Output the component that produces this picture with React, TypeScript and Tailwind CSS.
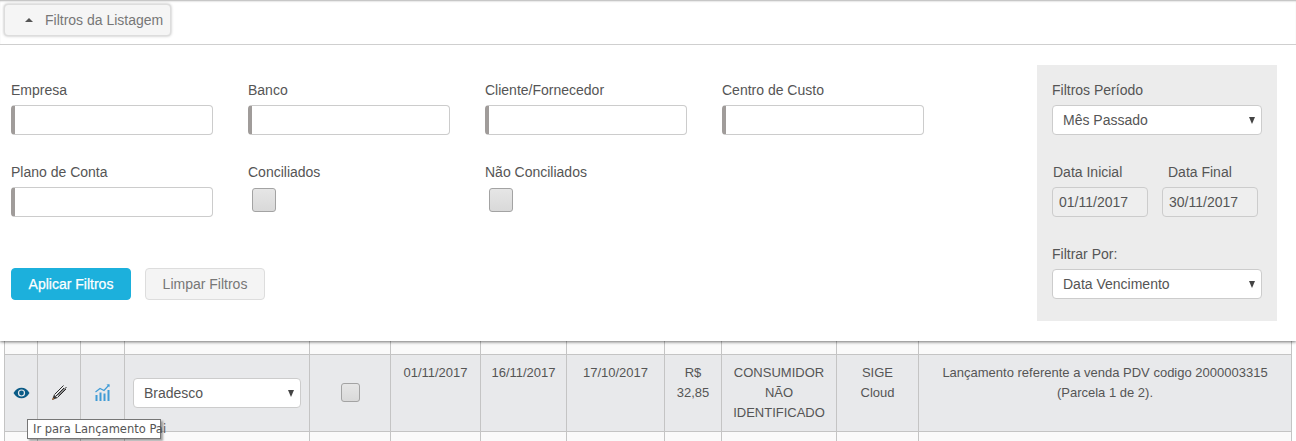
import React from "react";

const Field = ({ label }: { label: string }) => (
  <div className="flex flex-col">
    <label className="h-5 leading-5 mb-[5px] text-[14px] text-[#555]">{label}</label>
    <div className="w-[202px] h-[30px] bg-white border border-[#ccc] border-l-4 border-l-[#a09c9a] rounded-[4px]" />
  </div>
);

const Check = ({ label }: { label: string }) => (
  <div className="flex flex-col">
    <label className="h-5 leading-5 mb-[6px] text-[14px] text-[#555]">{label}</label>
    <div className="ml-1 w-6 h-6 rounded-[3px] border border-[#a3a3a3] bg-gradient-to-b from-[#e6e6e6] to-[#d9d9d9]" />
  </div>
);

const Sel = ({ value, w }: { value: string; w: string }) => (
  <div className={`relative h-[30px] bg-white border border-[#ccc] rounded-[4px] pl-[10px] flex items-center text-[14px] text-[#555] ${w}`}>
    <span>{value}</span>
    <span className="absolute right-[6px] top-[11px] w-0 h-0 border-l-[3.5px] border-r-[3.5px] border-t-[7px] border-l-transparent border-r-transparent border-t-[#444]" />
  </div>
);

const DateBox = ({ label, value, shift }: { label: string; value: string; shift?: boolean }) => (
  <div className="flex flex-col">
    <label className={`h-5 leading-5 mb-[5px] text-[14px] text-[#555] ${shift ? "pl-[6px]" : "pl-px"}`}>{label}</label>
    <div className="w-[96px] h-[30px] bg-[#eeeeee] border border-[#ccc] rounded-[4px] pl-[6px] flex items-center text-[14px] text-[#555]">{value}</div>
  </div>
);

const Eye = () => (
  <svg width="17" height="12" viewBox="0 0 17 12" className="mx-auto block">
    <path d="M0.5 6C2.5 2.5 5.3 0.8 8.5 0.8S14.5 2.5 16.5 6C14.5 9.5 11.7 11.2 8.5 11.2S2.5 9.5 0.5 6Z" fill="#0a5b86" />
    <circle cx="8.5" cy="6" r="3.6" fill="#e8e9eb" />
    <circle cx="8.5" cy="6" r="2.4" fill="#0a5b86" />
  </svg>
);

const Pencil = () => (
  <svg width="17" height="17" viewBox="0 0 17 17" className="mx-auto block">
    <g stroke="#2b2b2b" strokeWidth="1" fill="none">
      <path d="M3.5 10.5L11 3" />
      <path d="M5 12L13 4" />
      <path d="M6.5 13.5L15 5" />
      <path d="M5 9L12.5 1.5" />
      <path d="M7 11.5L15.5 3" />
    </g>
    <path d="M3 10.5L6.5 14L1 16Z" fill="#3a3a3a" />
    <path d="M1 16L2 13.5L3.5 15Z" fill="#b0703a" />
  </svg>
);

const Chart = () => (
  <svg width="15" height="17" viewBox="0 0 15 17" className="mx-auto block">
    <g fill="#3f9bd6">
      <rect x="0.5" y="11" width="2" height="6" />
      <rect x="4.5" y="8.5" width="2" height="8.5" />
      <rect x="8.5" y="9.5" width="2" height="7.5" />
      <rect x="12.5" y="6" width="2" height="11" />
    </g>
    <path d="M0.5 8L5 4.5L9 6.5L14 1" stroke="#3f9bd6" strokeWidth="1.2" fill="none" />
    <path d="M11.5 0.6L14.6 0.2L14.4 3.2Z" fill="#3f9bd6" />
  </svg>
);

const cols = [33, 43, 44, 185, 81, 90, 86, 98, 57, 115, 82, 373];
const cell = "border border-[#c4c4c4] text-center align-top px-2";

export default function App() {
  return (
    <div className="relative h-[441px] w-[1296px] overflow-hidden bg-white font-['Liberation_Sans',Arial,sans-serif] text-[13px] text-[#555]">
      <section className="relative z-10 h-[341px] bg-white shadow-[0_1px_3px_rgba(0,0,0,0.55)]">
        <header className="h-[45px] border-b border-[#cfcfcf] pt-1 pl-1 shadow-[inset_0_2px_2px_-1px_rgba(0,0,0,0.3)]">
          <button className="w-[167px] h-[32px] bg-[#f5f5f5] border border-[#dddddd] rounded-[4px] shadow-[0_0_3px_rgba(0,0,0,0.3)] flex items-center pl-[20px] text-[14px] text-[#777]">
            <span className="w-0 h-0 mr-[12px] border-l-[4px] border-r-[4px] border-b-[4px] border-l-transparent border-r-transparent border-b-[#555]" />
            Filtros da Listagem
          </button>
        </header>
        <div className="flex justify-between pt-5 pl-[11px] pr-[19px]">
          <div className="pt-[15px] w-[950px]">
            <div className="grid grid-cols-[237px_237px_237px_237px] gap-y-[27px]">
              <Field label="Empresa" />
              <Field label="Banco" />
              <Field label="Cliente/Fornecedor" />
              <Field label="Centro de Custo" />
              <Field label="Plano de Conta" />
              <Check label="Conciliados" />
              <Check label="Não Conciliados" />
            </div>
            <div className="flex gap-[14px] mt-[51px]">
              <button className="w-[120px] h-8 rounded-[4px] bg-[#1cb0dc] border border-[#1cb0dc] text-white text-[14px] [-webkit-text-stroke:0.25px_white]">Aplicar Filtros</button>
              <button className="w-[120px] h-8 rounded-[4px] bg-[#f4f4f4] border border-[#dddddd] text-[#777] text-[14px]">Limpar Filtros</button>
            </div>
          </div>
          <aside className="w-[240px] h-[256px] bg-[#ececec] p-[15px]">
            <label className="block h-5 leading-5 mb-[5px] text-[14px] text-[#555]">Filtros Período</label>
            <Sel value="Mês Passado" w="w-[210px]" />
            <div className="flex gap-[14px] mt-[27px]">
              <DateBox label="Data Inicial" value="01/11/2017" />
              <DateBox label="Data Final" value="30/11/2017" shift />
            </div>
            <label className="block h-5 leading-5 mt-[27px] mb-[5px] text-[14px] text-[#555]">Filtrar Por:</label>
            <Sel value="Data Vencimento" w="w-[210px]" />
          </aside>
        </div>
      </section>

      <table className="ml-1 w-[1288px] table-fixed border-collapse -mt-px">
        <colgroup>
          {cols.map((c, i) => (
            <col key={i} style={{ width: c }} />
          ))}
        </colgroup>
        <tbody>
          <tr className="h-[14px] bg-[#fafafa]">
            {cols.map((_, i) => (
              <td key={i} className="border border-[#c4c4c4] border-t-0 p-0" />
            ))}
          </tr>
          <tr className="h-[77px] bg-[#e8e9eb] leading-5">
            <td className="border border-[#c4c4c4] align-middle p-0"><Eye /></td>
            <td className="border border-[#c4c4c4] align-middle p-0"><Pencil /></td>
            <td className="border border-[#c4c4c4] align-middle p-0"><Chart /></td>
            <td className="border border-[#c4c4c4] align-middle px-2">
              <Sel value="Bradesco" w="w-[168px]" />
            </td>
            <td className="border border-[#c4c4c4] align-middle p-0">
              <div className="mx-auto w-[19px] h-[19px] rounded-[3px] border border-[#a3a3a3] bg-gradient-to-b from-[#e6e6e6] to-[#d9d9d9]" />
            </td>
            <td className={`${cell} pt-2`}>01/11/2017</td>
            <td className={`${cell} pt-2`}>16/11/2017</td>
            <td className={`${cell} pt-2`}>17/10/2017</td>
            <td className={`${cell} pt-2`}>R$ 32,85</td>
            <td className="border border-[#c4c4c4] text-center align-top px-1 pt-2">CONSUMIDOR NÃO IDENTIFICADO</td>
            <td className={`${cell} pt-2`}>SIGE Cloud</td>
            <td className={`${cell} pt-2`}>Lançamento referente a venda PDV codigo 2000003315 (Parcela 1 de 2).</td>
          </tr>
          <tr className="h-[20px] bg-[#fafafa]">
            {cols.map((_, i) => (
              <td key={i} className="border border-[#c4c4c4] p-0" />
            ))}
          </tr>
        </tbody>
      </table>

      <div className="absolute z-20 left-[27px] top-[419px] w-[134px] h-[20px] bg-white border border-[#767676] shadow-[2px_2px_2px_rgba(0,0,0,0.35)] pl-[5px] font-['DejaVu_Sans',sans-serif] text-[11.5px] leading-[18px] text-[#555] whitespace-nowrap">
        Ir para Lançamento Pai
      </div>
    </div>
  );
}
